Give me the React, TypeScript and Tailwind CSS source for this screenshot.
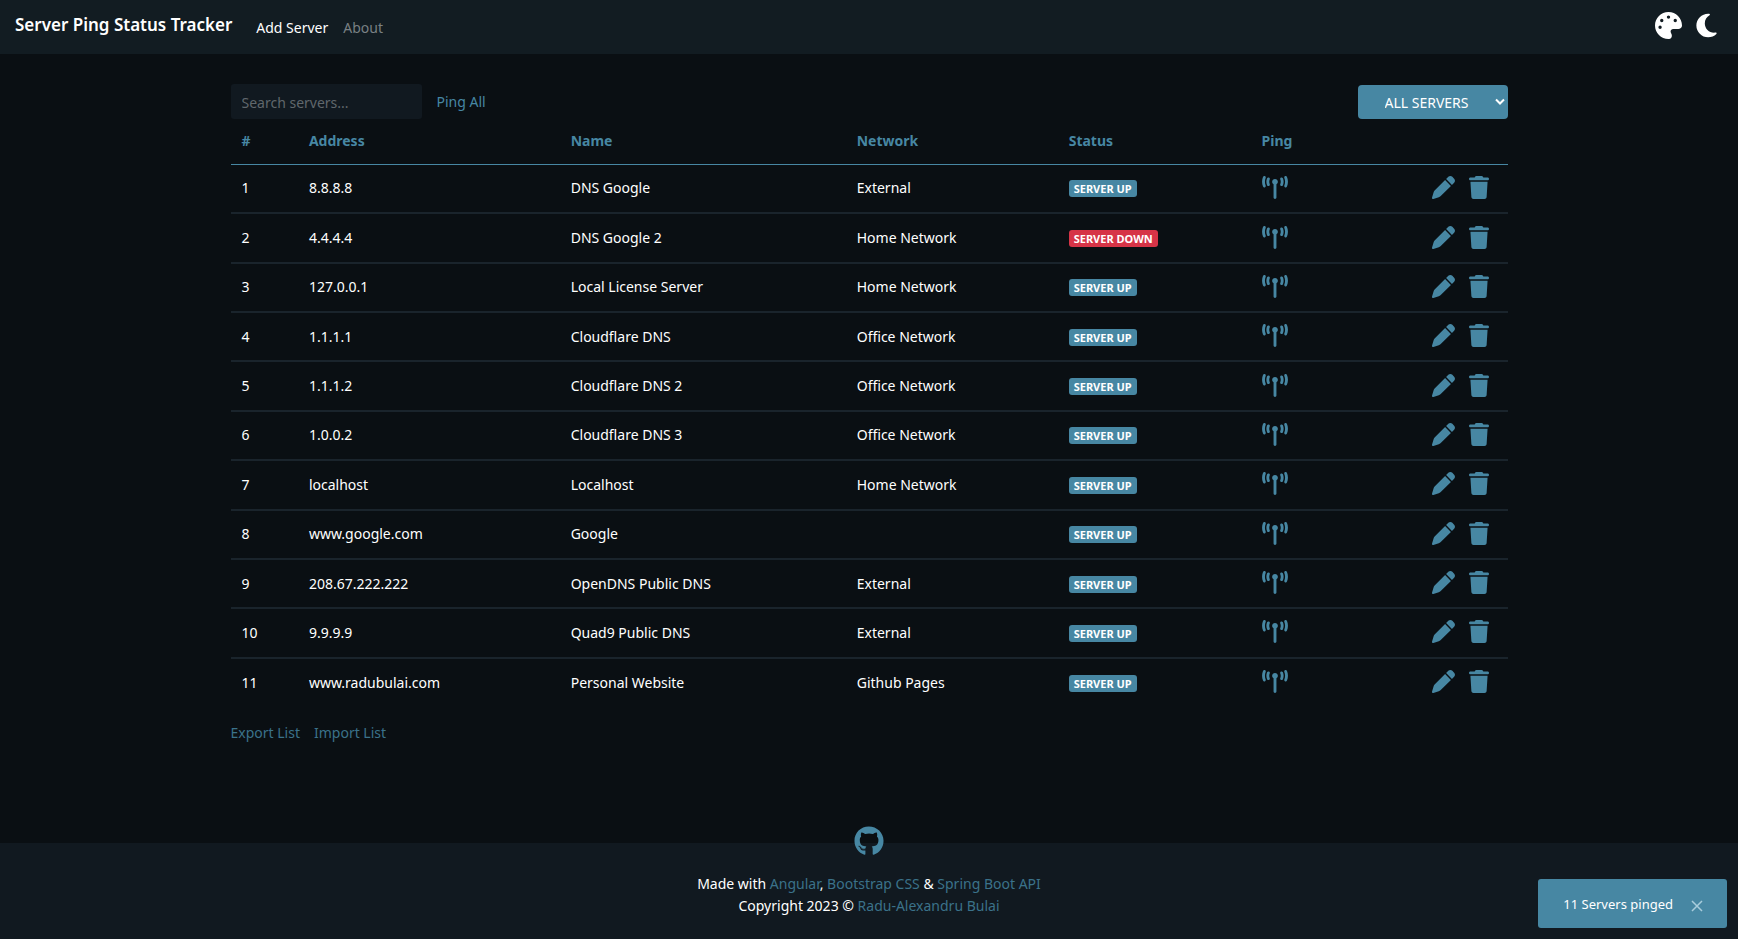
import { useState } from "react";
import { FaGithub } from "react-icons/fa";
import { FaMoon, FaPalette, FaPen, FaTowerBroadcast, FaTrash } from "react-icons/fa6";

type Server = { address: string; name: string; network: string; up: boolean };

const SERVERS: Server[] = [
  { address: "8.8.8.8", name: "DNS Google", network: "External", up: true },
  { address: "4.4.4.4", name: "DNS Google 2", network: "Home Network", up: false },
  { address: "127.0.0.1", name: "Local License Server", network: "Home Network", up: true },
  { address: "1.1.1.1", name: "Cloudflare DNS", network: "Office Network", up: true },
  { address: "1.1.1.2", name: "Cloudflare DNS 2", network: "Office Network", up: true },
  { address: "1.0.0.2", name: "Cloudflare DNS 3", network: "Office Network", up: true },
  { address: "localhost", name: "Localhost", network: "Home Network", up: true },
  { address: "www.google.com", name: "Google", network: "", up: true },
  { address: "208.67.222.222", name: "OpenDNS Public DNS", network: "External", up: true },
  { address: "9.9.9.9", name: "Quad9 Public DNS", network: "External", up: true },
  { address: "www.radubulai.com", name: "Personal Website", network: "Github Pages", up: true },
];

export default function App() {
  const [query, setQuery] = useState("");
  const [filter, setFilter] = useState("ALL");
  const [toast, setToast] = useState(true);
  const rows = SERVERS.map((s, i) => ({ ...s, id: i + 1 })).filter(
    (s) =>
      (filter === "ALL" || (filter === "UP") === s.up) &&
      `${s.address} ${s.name} ${s.network}`.toLowerCase().includes(query.toLowerCase()),
  );

  return (
    <div className="flex min-h-screen flex-col bg-[#0a0f13] font-['Noto_Sans','Open_Sans',sans-serif] text-sm leading-[22px] text-white">
      <header className="flex h-[54px] items-center bg-[#121c22] px-[15px]">
        <a href="#" className="pb-1 text-[17px] font-semibold">Server Ping Status Tracker</a>
        <nav className="ml-6 flex gap-[15px] pt-[2px]">
          <a href="#add">Add Server</a>
          <a href="#about" className="text-[#798084]">About</a>
        </nav>
        <div className="ml-auto flex items-center gap-[14px] pr-[6px] pb-1">
          <button type="button" aria-label="Choose theme colour"><FaPalette className="size-[27px]" /></button>
          <button type="button" aria-label="Toggle dark mode"><FaMoon className="h-[27px] w-[21px]" /></button>
        </div>
      </header>

      <main className="mx-auto w-full max-w-[1277px] flex-1 pt-[30px]">
        <div className="flex items-center">
          <input
            type="search"
            aria-label="Search servers"
            placeholder="Search servers..."
            value={query}
            onChange={(e) => setQuery(e.target.value)}
            className="h-[35px] w-[191px] rounded-[3px] bg-[#111920] px-[11px] pt-[2px] outline-none placeholder:text-[#60676c]"
          />
          <button type="button" className="ml-[15px] text-[#4787a3]">Ping All</button>
          <div className="relative ml-auto">
            <select
              aria-label="Filter servers"
              value={filter}
              onChange={(e) => setFilter(e.target.value)}
              className="block h-[34px] w-[150px] appearance-none rounded bg-[#4787a3] pt-[2px] pr-5 pl-[27px]"
            >
              <option value="ALL">ALL SERVERS</option>
              <option value="UP">SERVER UP</option>
              <option value="DOWN">SERVER DOWN</option>
            </select>
            <svg viewBox="0 0 10 8" className="pointer-events-none absolute top-[13px] right-[3px] h-2 w-[10px]" fill="none" stroke="currentColor" strokeWidth="2" aria-hidden="true">
              <path d="M1 1.5l4 4 4-4" />
            </svg>
          </div>
        </div>

        <table className="h-[588px] w-full table-fixed border-collapse text-left">
          <thead>
            <tr className="h-[45px] text-[#4787a3]">
              <th className="w-[5.2%] border-b border-[#4787a3] px-[11px]">#</th>
              <th className="w-[20.5%] border-b border-[#4787a3] px-3">Address</th>
              <th className="w-[22.4%] border-b border-[#4787a3] px-3">Name</th>
              <th className="w-[16.6%] border-b border-[#4787a3] px-3">Network</th>
              <th className="w-[15.1%] border-b border-[#4787a3] px-3">Status</th>
              <th className="border-b border-[#4787a3] px-3">Ping</th>
              <th className="w-[8%] border-b border-[#4787a3]" aria-label="Actions" />
            </tr>
          </thead>
          <tbody>
            {rows.map((s) => (
              <tr key={s.id} className="h-[49px] border-b-2 border-[#1a242c] last:border-b-0">
                <td className="px-[11px]">{s.id}</td>
                <td className="px-3">{s.address}</td>
                <td className="px-3">{s.name}</td>
                <td className="px-3">{s.network}</td>
                <td className="px-3">
                  <span className={s.up ? "inline-block rounded-[3px] bg-[#4787a3] px-[5px] text-[11px] leading-[17px] font-bold" : "inline-block rounded-[3px] bg-[#d63447] px-[5px] text-[11px] leading-[17px] font-bold"}>
                    {s.up ? "SERVER UP" : "SERVER DOWN"}
                  </span>
                </td>
                <td className="px-3 pb-[2px]">
                  <button type="button" aria-label={`Ping ${s.name}`} className="block text-[#4787a3]"><FaTowerBroadcast className="h-[23px] w-[26px]" /></button>
                </td>
                <td className="pb-[2px]">
                  <div className="flex justify-end gap-[14px] pr-[19px] text-[#4787a3]">
                    <button type="button" aria-label={`Edit ${s.name}`}><FaPen className="size-[23px]" /></button>
                    <button type="button" aria-label={`Delete ${s.name}`}><FaTrash className="h-[23px] w-5" /></button>
                  </div>
                </td>
              </tr>
            ))}
          </tbody>
        </table>

        <div className="mt-[15px] flex gap-[14px] text-[#3b728a]">
          <button type="button">Export List</button>
          <button type="button">Import List</button>
        </div>
      </main>

      <footer className="flex h-[96px] flex-col items-center bg-[#111920] text-center">
        <a href="#github" aria-label="GitHub" className="-mt-[17px] text-[#4787a3]"><FaGithub className="size-[30px]" /></a>
        <p className="mt-[17px]">
          Made with <a href="#angular" className="text-[#3b728a]">Angular</a>, <a href="#bootstrap" className="text-[#3b728a]">Bootstrap CSS</a> &amp; <a href="#spring" className="text-[#3b728a]">Spring Boot API</a>
          <br />
          Copyright 2023 © <a href="#author" className="text-[#3b728a]">Radu-Alexandru Bulai</a>
        </p>
      </footer>

      {toast && (
        <div role="status" className="fixed right-[11px] bottom-[11px] flex h-[49px] items-center gap-[18px] rounded-[3px] bg-[#4787a3] pr-6 pl-[25px] text-[13px]">
          11 Servers pinged
          <button type="button" aria-label="Close" onClick={() => setToast(false)} className="pt-1 text-[#a9cddc]">
            <svg viewBox="0 0 12 12" className="size-3" fill="none" stroke="currentColor" strokeWidth="1.5" aria-hidden="true"><path d="M1 1l10 10M11 1L1 11" /></svg>
          </button>
        </div>
      )}
    </div>
  );
}
